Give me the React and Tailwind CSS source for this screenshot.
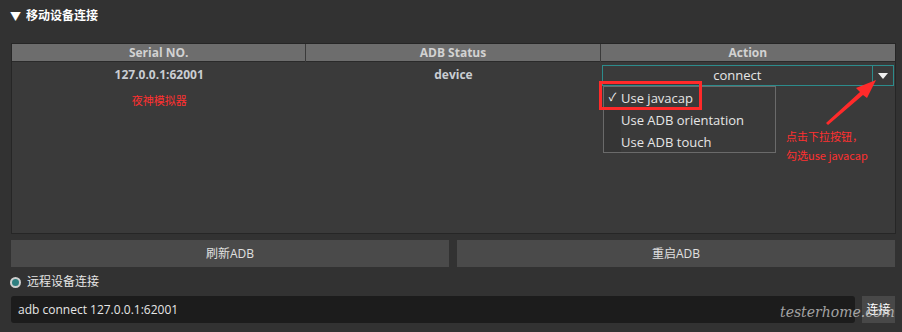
export default function App() {
  const font = { fontFamily: '"Open Sans","Noto Sans CJK SC",sans-serif' };
  return (
    <div className="relative w-[902px] h-[332px] bg-[#323232] overflow-hidden text-[13px] text-[#dcdcdc]" style={font}>
      {/* title */}
      <div className="h-[32px] flex items-center pl-[10px] gap-[5px] font-bold text-white">
        <span className="text-[11px] leading-none">▼</span>
        <span className="text-[12px]">移动设备连接</span>
      </div>
      {/* table */}
      <div className="mt-[11px] ml-[11px] w-[885px] h-[191px] bg-[#3a3a3a] border border-[#262626] flex flex-col">
        <div className="grid grid-cols-3 h-[18px] bg-[#6d6d6d] border-b border-[#2a2a2a] text-[12px] font-bold text-[#d2d2d2] leading-[18px]">
          <div className="text-center border-r border-[#3a3a3a]">Serial NO.</div>
          <div className="text-center border-r border-[#3a3a3a]">ADB Status</div>
          <div className="text-center">Action</div>
        </div>
        <div className="grid grid-cols-3 pt-[3px] text-[12px] font-bold text-[#c9cdd2]">
          <div className="flex flex-col items-center">
            <div className="h-[20px] leading-[20px]">127.0.0.1:62001</div>
            <div className="mt-[8px] text-[11px] font-normal text-[#ff3030]">夜神模拟器</div>
          </div>
          <div className="text-center h-[20px] leading-[20px]">device</div>
          <div className="pl-[1px] pr-[1px] relative">
            <div className="h-[21px] border border-[#2c8c8c] flex text-[13px] font-normal text-[#e6e6e6]">
              <div className="flex-1 text-center leading-[19px]">connect</div>
              <div className="w-[21px] border-l border-[#2c8c8c] flex items-center justify-center">
                <svg width="10" height="6" viewBox="0 0 10 6"><path d="M0 0 H10 L5 6 Z" fill="#f0f0f0" /></svg>
              </div>
            </div>
          </div>
        </div>
      </div>
      {/* buttons */}
      <div className="mt-[6px] ml-[11px] w-[884px] grid grid-cols-2 gap-[8px]">
        <div className="h-[27px] bg-[#4a4a4a] text-center leading-[27px] text-[12px] text-[#e0e0e0]">刷新ADB</div>
        <div className="h-[27px] bg-[#4a4a4a] text-center leading-[27px] text-[12px] text-[#e0e0e0]">重启ADB</div>
      </div>
      {/* radio */}
      <div className="mt-[5px] ml-[10px] h-[20px] flex items-center gap-[6px] text-[12px] text-[#e6e6e6]">
        <span className="w-[11px] h-[11px] rounded-full bg-[#cfcfcf] flex items-center justify-center">
          <span className="w-[7px] h-[7px] rounded-full bg-[#2f7f80]" />
        </span>
        <span>远程设备连接</span>
      </div>
      {/* input row */}
      <div className="mt-[4px] ml-[11px] flex gap-[7px]">
        <div className="w-[844px] h-[27px] bg-[#1c1c1c] rounded-[3px] pl-[7px] leading-[27px] text-[12px] text-[#e6e6e6]">adb connect 127.0.0.1:62001</div>
        <div className="w-[33px] h-[27px] bg-[#484848] text-center leading-[27px] text-[12px] text-white">连接</div>
      </div>

      {/* dropdown menu overlay */}
      <div className="absolute left-[603px] top-[86px] w-[173px] h-[67px] bg-[#3a3a3a] border border-[#6a6a6a] flex text-[13px] text-[#e6e6e6]">
        <div className="w-[17px] flex flex-col">
          <div className="h-[21px] flex items-center justify-center text-[11px] text-white">✓</div>
          <div className="flex-1 bg-[#353535]" />
        </div>
        <div className="flex flex-col pt-[1px]">
          <div className="h-[21px] leading-[21px]">Use javacap</div>
          <div className="h-[22px] leading-[22px]">Use ADB orientation</div>
          <div className="h-[22px] leading-[22px]">Use ADB touch</div>
        </div>
      </div>
      {/* red annotation box */}
      <div className="absolute left-[599px] top-[81px] w-[103px] h-[29px] border-[3px] border-[#ff2a2a]" />
      {/* red arrow */}
      <svg className="absolute left-[820px] top-[76px]" width="62" height="50" viewBox="0 0 62 50">
        <path d="M6 47 L40 16 L36 12 L56 4 L47 22 L43 19 L8 49 Z" fill="#ff2a2a" />
      </svg>
      {/* red text */}
      <div className="absolute left-[786px] top-[127px] text-[11px] leading-[19px] text-[#ff3030]" style={{ fontFamily: '"Noto Sans CJK SC","Open Sans",sans-serif' }}>
        <div>点击下拉按钮，</div>
        <div>勾选use javacap</div>
      </div>
      {/* watermark */}
      <div className="absolute left-[780px] top-[305px] text-[14px] italic text-[#d0d0d0] opacity-75 leading-none" style={{ fontFamily: '"DejaVu Serif",serif' }}>
        testerhome.com
      </div>
    </div>
  );
}
